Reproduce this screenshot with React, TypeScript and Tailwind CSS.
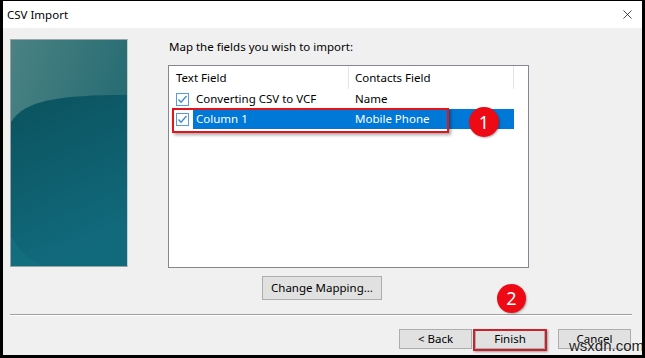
import { X } from "lucide-react";

const font = { fontFamily: '"Noto Sans", "Open Sans", sans-serif' };

function Check() {
  return (
    <svg width="13" height="13" viewBox="0 0 13 13" className="shrink-0">
      <rect x="0.5" y="0.5" width="12" height="12" fill="#fff" stroke="#5b9bd5" />
      <path d="M2.5 6.5 L5 9.2 L10.5 3" fill="none" stroke="#3a8ad6" strokeWidth="1.3" />
    </svg>
  );
}

function SidePicture() {
  return (
    <div className="w-[118px] h-[228px] border border-[#9aa3a5] border-r-[#c8cccd] shrink-0">
      <svg width="116" height="226" viewBox="0 0 116 226" className="block">
        <defs>
          <linearGradient id="top" x1="0" y1="0" x2="1" y2="0.6">
            <stop offset="0" stopColor="#4b8283" />
            <stop offset="1" stopColor="#1f6870" />
          </linearGradient>
          <linearGradient id="low" x1="0" y1="0" x2="0.3" y2="1">
            <stop offset="0" stopColor="#0b525e" />
            <stop offset="1" stopColor="#116a7c" />
          </linearGradient>
        </defs>
        <rect width="116" height="226" fill="url(#top)" />
        <path d="M0 82 C 14 60, 48 55, 116 55 L116 226 L0 226 Z" fill="url(#low)" />
        <path d="M0 196 C 10 214, 24 224, 34 226 L0 226 Z" fill="#14707f" opacity="0.7" />
      </svg>
    </div>
  );
}

function Btn({ label, w, className = "" }: { label: string; w: string; className?: string }) {
  return (
    <div
      className={`${w} h-[20px] bg-[#e1e1e1] border border-[#adadad] flex items-center justify-center text-[11.5px] text-black ${className}`}
    >
      {label}
    </div>
  );
}

export default function App() {
  return (
    <div
      style={font}
      className="relative w-[645px] h-[358px] bg-[#f0f0f0] border-black border-x-[3px] border-b-[3px] border-t flex flex-col overflow-hidden text-black"
    >
      {/* title bar */}
      <div className="h-[27px] bg-white flex items-center justify-between pl-[4px] pr-[7px] shrink-0">
        <span className="text-[11.5px]">CSV Import</span>
        <X size={15} strokeWidth={1.2} color="#111" />
      </div>

      <div className="flex flex-col px-[7px]">
        <div className="flex pt-[11px]">
          <SidePicture />
          <div className="ml-[40px] flex flex-col">
            <div className="h-[16px] leading-[16px] text-[11.5px] pl-[1px]">Map the fields you wish to import:</div>
            <div className="mt-[10px] w-[361px] h-[203px] bg-white border border-[#828790] text-[11.5px]">
              <div className="flex h-[23px] items-center">
                <div className="w-[180px] h-full pl-[7px] flex items-center border-r border-[#e5e5e5]">Text Field</div>
                <div className="w-[165px] h-full pl-[6px] flex items-center border-r border-[#e5e5e5]">Contacts Field</div>
              </div>
              <div className="flex h-[20px] items-center">
                <div className="w-[24px] pl-[7px] flex items-center"><Check /></div>
                <div className="flex w-[321px] h-full items-center">
                  <span className="w-[156px] pl-[3px]">Converting CSV to VCF</span>
                  <span className="pl-[6px]">Name</span>
                </div>
              </div>
              <div className="flex h-[20px] items-center">
                <div className="w-[24px] pl-[7px] flex items-center"><Check /></div>
                <div className="flex w-[321px] h-full items-center bg-[#0078d7] text-white">
                  <span className="w-[156px] pl-[3px]">Column 1</span>
                  <span className="pl-[6px]">Mobile Phone</span>
                </div>
              </div>
            </div>
            <Btn label="Change Mapping..." w="w-[120px]" className="mt-[8px] ml-[94px] h-[24px]" />
          </div>
        </div>

        <div className="mt-[14px] w-[622px] h-[2px] border-t border-[#a0a0a0] border-b border-b-white" />

        <div className="mt-[13px] flex pl-[389px]">
          <Btn label="< Back" w="w-[73px]" />
          <Btn label="Finish" w="w-[70px]" className="ml-[3px]" />
          <Btn label="Cancel" w="w-[73px]" className="ml-[13px]" />
        </div>
      </div>

      {/* annotations */}
      <div className="absolute left-[169px] top-[107px] w-[277px] h-[25px] border-2 border-[#e3141b] shadow-[2px_2px_3px_rgba(0,0,0,0.35)]" />
      <div className="absolute left-[466px] top-[106px] w-[30px] h-[30px] rounded-full bg-[#ee0a14] text-white text-[18px] flex items-center justify-center shadow-[1px_1px_2px_rgba(0,0,0,0.3)]">
        1
      </div>
      <div className="absolute left-[494px] top-[283px] w-[29px] h-[29px] rounded-full bg-[#ee0a14] text-white text-[18px] flex items-center justify-center shadow-[1px_1px_2px_rgba(0,0,0,0.3)]">
        2
      </div>
      <div className="absolute left-[470px] top-[328px] w-[74px] h-[22px] border-2 border-[#c8232c] shadow-[1px_1px_2px_rgba(0,0,0,0.35)]" />
      <div
        className="absolute left-[566px] top-[334px] text-[15px] text-[#222] [text-shadow:0_0_2px_#fff]"
        style={{ fontFamily: '"Liberation Sans", Arial, sans-serif' }}
      >
        wsxdn.com
      </div>
    </div>
  );
}
